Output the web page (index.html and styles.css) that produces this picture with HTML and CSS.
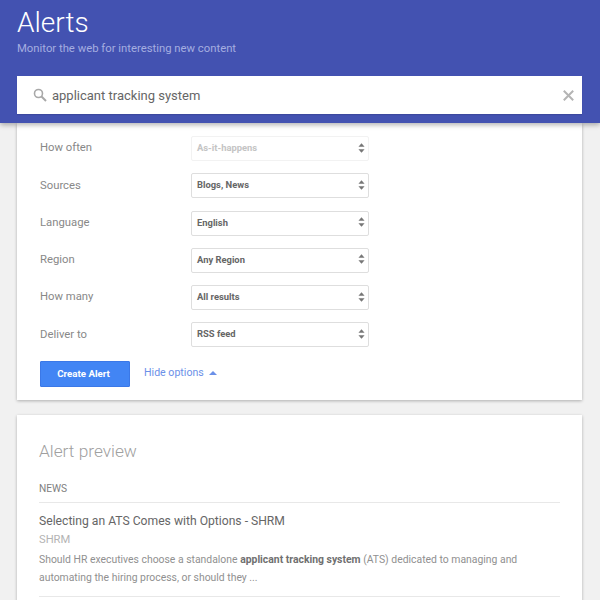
FILE: index.html
```html
<!DOCTYPE html>
<html lang="en">
<head>
<meta charset="utf-8">
<title>Alerts</title>
<link rel="stylesheet" href="styles.css">
</head>
<body>
<header class="header">
  <h1 class="title">Alerts</h1>
  <p class="subtitle">Monitor the web for interesting new content</p>
  <div class="search">
    <svg class="search-icon" width="14" height="14" viewBox="0 0 14 14"><circle cx="5.5" cy="5.5" r="4" fill="none" stroke="#a8a8a8" stroke-width="1.6"/><path d="M8.5 8.5L13 13" stroke="#a8a8a8" stroke-width="2"/></svg>
    <span class="query">applicant tracking system</span>
    <svg class="clear" width="11" height="11" viewBox="0 0 11 11"><path d="M0.8 0.8L10.2 10.2M10.2 0.8L0.8 10.2" stroke="#b4b4b4" stroke-width="2"/></svg>
  </div>
</header>
<main class="main">
  <section class="card options">
    <div class="row"><span class="label">How often</span><div class="select disabled"><span>As-it-happens</span><svg class="arrows" width="7" height="10" viewBox="0 0 8 11"><path d="M4 0L7.5 4H.5zM4 11L.5 7h7z" fill="#777"/></svg></div></div>
    <div class="row"><span class="label">Sources</span><div class="select"><span>Blogs, News</span><svg class="arrows" width="7" height="10" viewBox="0 0 8 11"><path d="M4 0L7.5 4H.5zM4 11L.5 7h7z" fill="#777"/></svg></div></div>
    <div class="row"><span class="label">Language</span><div class="select"><span>English</span><svg class="arrows" width="7" height="10" viewBox="0 0 8 11"><path d="M4 0L7.5 4H.5zM4 11L.5 7h7z" fill="#777"/></svg></div></div>
    <div class="row"><span class="label">Region</span><div class="select"><span>Any Region</span><svg class="arrows" width="7" height="10" viewBox="0 0 8 11"><path d="M4 0L7.5 4H.5zM4 11L.5 7h7z" fill="#777"/></svg></div></div>
    <div class="row"><span class="label">How many</span><div class="select"><span>All results</span><svg class="arrows" width="7" height="10" viewBox="0 0 8 11"><path d="M4 0L7.5 4H.5zM4 11L.5 7h7z" fill="#777"/></svg></div></div>
    <div class="row"><span class="label">Deliver to</span><div class="select"><span>RSS feed</span><svg class="arrows" width="7" height="10" viewBox="0 0 8 11"><path d="M4 0L7.5 4H.5zM4 11L.5 7h7z" fill="#777"/></svg></div></div>
    <div class="actions">
      <button class="create" type="button">Create Alert</button>
      <a class="hide" href="#">Hide options<svg class="caret" width="8" height="4" viewBox="0 0 8 4"><path d="M4 0L8 4H0z" fill="#6b90e8"/></svg></a>
    </div>
  </section>
  <section class="card preview">
    <h2 class="preview-title">Alert preview</h2>
    <div class="section-name">NEWS</div>
    <article class="result">
      <div class="result-title">Selecting an ATS Comes with Options - SHRM</div>
      <div class="result-source">SHRM</div>
      <p class="result-text">Should HR executives choose a standalone <b>applicant tracking system</b> (ATS) dedicated to managing and automating the hiring process, or should they ...</p>
    </article>
  </section>
</main>
</body>
</html>
```

FILE: styles.css
```css
* { box-sizing: border-box; }
html, body { margin: 0; height: 600px; overflow: hidden; }
body { background: #f1f1f1; font-family: Roboto, "Liberation Sans", sans-serif; color: #666; }

.header {
  position: relative;
  z-index: 2;
  height: 123px;
  padding: 8px 18px 0 17px;
  background: #4352b1;
  box-shadow: 0 2px 5px rgba(0,0,0,.3);
}
.title { margin: 0; font-size: 28px; font-weight: 300; line-height: 30px; color: #fff; }
.subtitle { margin: 2px 0 0; font-size: 11.3px; line-height: 18px; color: #a5aee0; }
.search {
  display: flex;
  align-items: center;
  height: 38px;
  margin-top: 18px;
  padding: 0 8px 0 16px;
  background: #fff;
  box-shadow: 0 1px 1px rgba(0,0,0,.1);
}
.search-icon { flex: none; margin-right: 5px; }
.query { flex: 1; font-size: 13px; color: #666; }
.clear { flex: none; }

.main { padding: 0 18px 0 17px; }
.card { background: #fff; box-shadow: 0 1px 3px rgba(0,0,0,.28); }
.options { padding: 13px 23px 13px; height: 277px; }
.row { display: flex; align-items: center; height: 25px; margin-bottom: 12.3px; }
.label { width: 151px; padding-bottom: 1.4px; font-size: 11.3px; color: #888; }
.select {
  display: flex;
  align-items: center;
  justify-content: space-between;
  width: 178px;
  height: 25px;
  padding: 0 3px 2px 5px;
  border: 1px solid #dedede;
  border-radius: 2px;
  font-size: 9.4px;
  font-weight: 700;
  color: #666;
  background: #fff;
}
.select.disabled { border-color: #f2f2f2; color: #c4c4c4; }
.actions { display: flex; align-items: center; padding-top: 1px; }
.create {
  width: 90px;
  height: 26px;
  padding: 0 3px 0 0;
  border: 1px solid #3b78e7;
  border-radius: 1px;
  background: #4285f4;
  color: #fff;
  font: 700 9.7px Roboto, "Liberation Sans", sans-serif;
}
.hide { display: flex; align-items: center; margin-left: 14px; padding-bottom: 2px; font-size: 10.6px; color: #6b90e8; text-decoration: none; }
.caret { margin-left: 5px; }

.preview { margin-top: 15px; padding: 25px 22px 0 22px; height: 200px; }
.preview-title { margin: 0; font-size: 17.3px; font-weight: 300; line-height: 22px; color: #a0a0a0; }
.section-name { margin-top: 20px; padding-bottom: 7px; font-size: 10.2px; line-height: 13px; color: #808080; border-bottom: 1px solid #e8e8e8; }
.result { padding: 11px 0 9px; border-bottom: 1px solid #e8e8e8; }
.result-title { font-size: 12.15px; line-height: 15px; color: #666; }
.result-source { margin-top: 3px; font-size: 11.2px; line-height: 15px; color: #b4b4b4; }
.result-text { max-width: 490px; margin: 4px 0 0; font-size: 10.4px; line-height: 18px; color: #909090; }
.result-text b { color: #707070; font-weight: 700; }
```
